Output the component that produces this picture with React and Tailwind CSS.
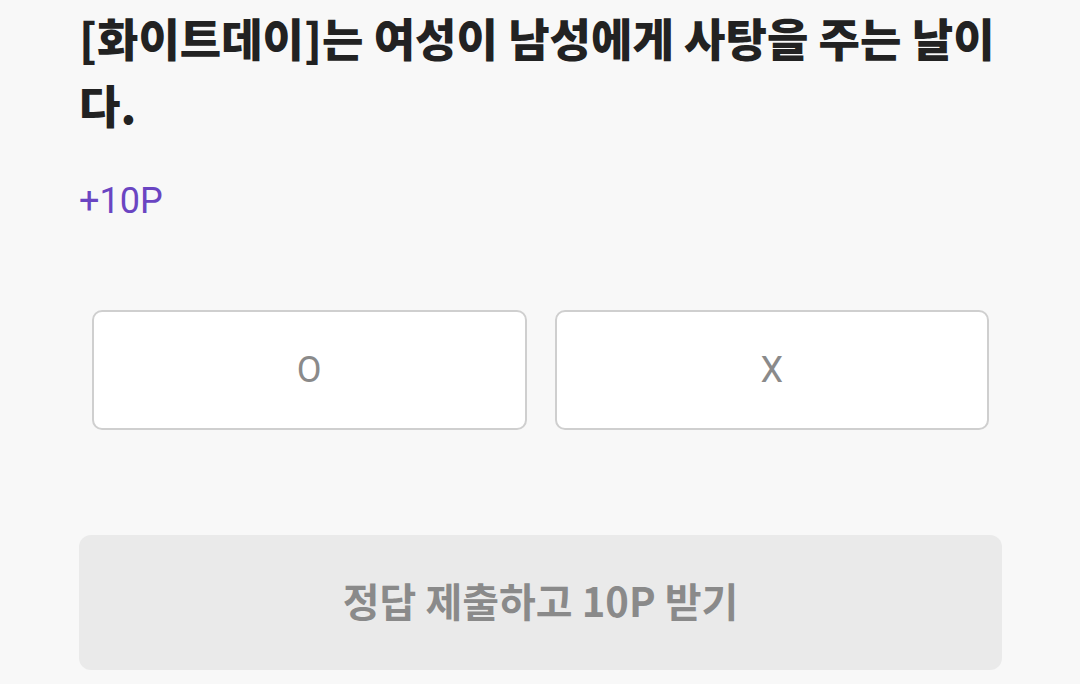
export default function App() {
  return (
    <div
      className="w-[1080px] h-[684px] overflow-hidden bg-[#f8f8f8] pl-[79px] pr-[78px]"
      style={{ fontFamily: 'Roboto, "Noto Sans CJK KR", sans-serif' }}
    >
      <h1 className="pt-[4px] text-[45px] leading-[67px] font-black text-[#222222] break-all [font-family:'Noto_Sans_CJK_KR',sans-serif]">
        [화이트데이]는 여성이 남성에게 사탕을 주는 날이다.
      </h1>

      <p className="mt-[43px] text-[36px] leading-[40px] text-[#6a45c2]">+10P</p>

      <div className="mt-[89px] grid grid-cols-2 gap-[28px] px-[13px]">
        <button className="h-[120px] rounded-[10px] border-2 border-[#cfcfcf] bg-white text-[36px] text-[#8a8a8a]">
          O
        </button>
        <button className="h-[120px] rounded-[10px] border-2 border-[#cfcfcf] bg-white text-[36px] text-[#8a8a8a]">
          X
        </button>
      </div>

      <button className="mt-[105px] flex h-[135px] w-full items-center justify-center rounded-[12px] bg-[#eaeaea] pb-[6px] text-[40px] font-bold text-[#8a8a8a] [font-family:'Noto_Sans_CJK_KR',sans-serif]">
        정답 제출하고 10P 받기
      </button>
    </div>
  );
}
